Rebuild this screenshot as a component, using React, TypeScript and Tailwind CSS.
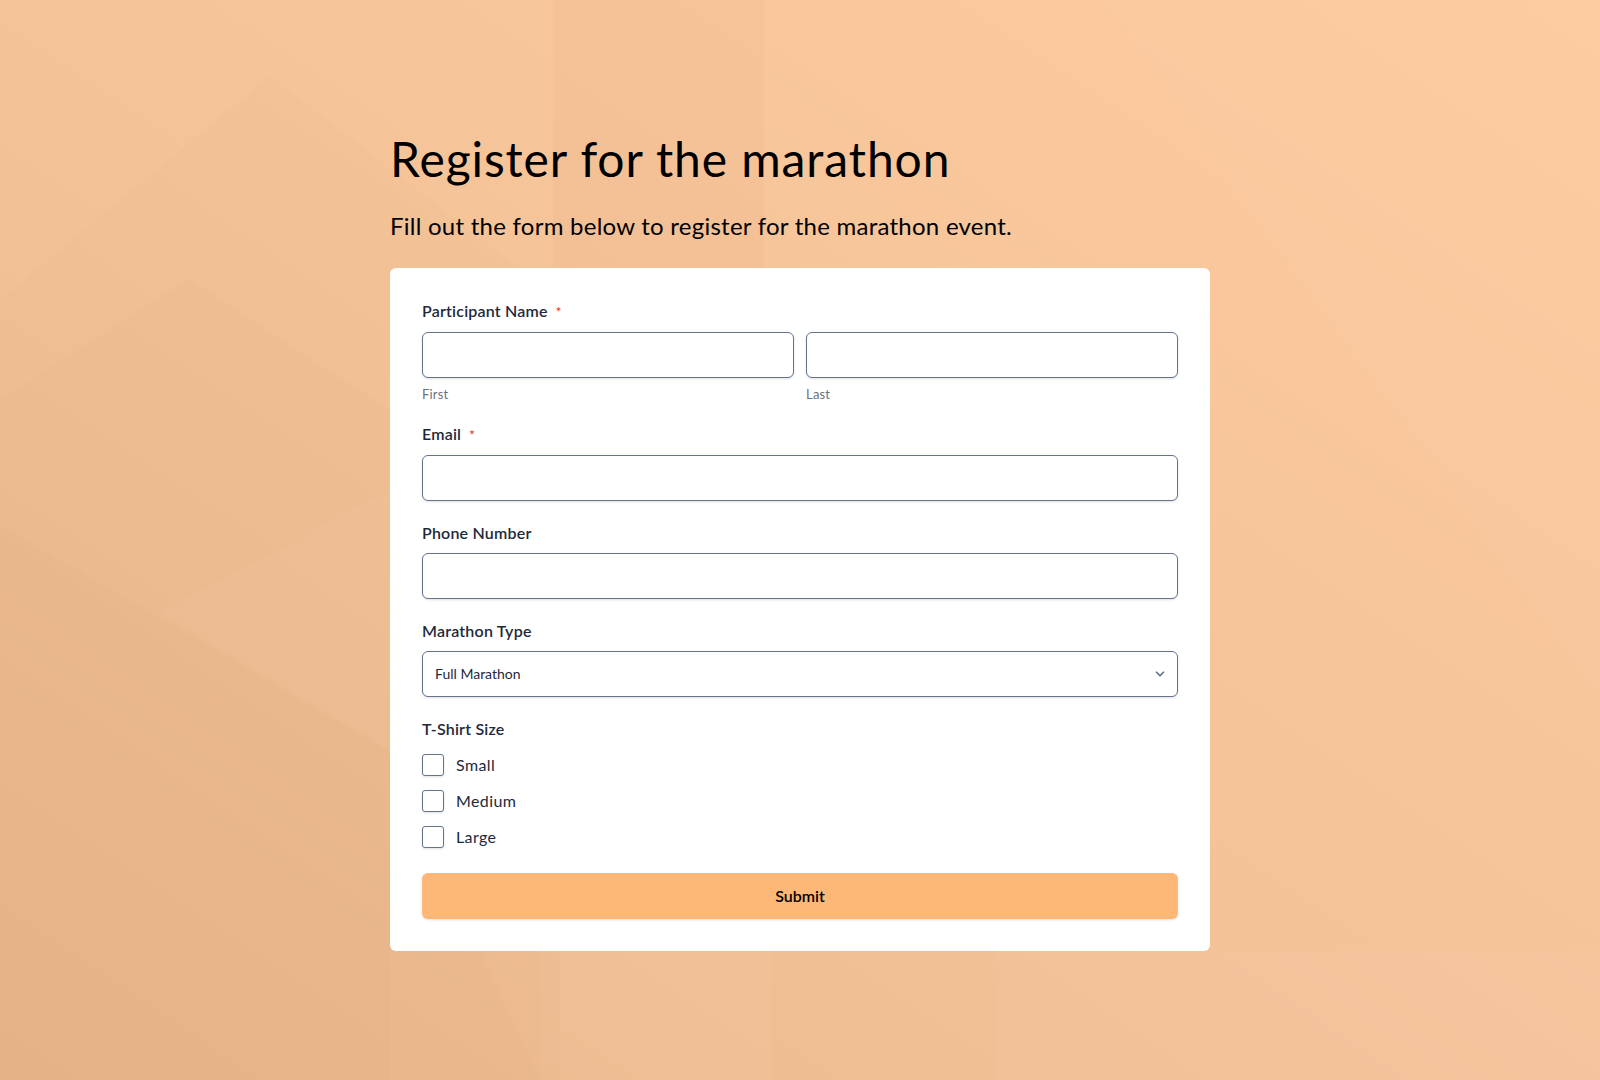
import { ChevronDown } from "lucide-react";

const Label = ({ text, required }: { text: string; required?: boolean }) => (
  <label className="mb-2 block text-[16px] leading-6 font-semibold tracking-[0.2px] text-[#1e293b]">
    {text}
    {required && <span className="ml-2 text-[13px] text-[#e0452b]">*</span>}
  </label>
);

const Input = () => (
  <input
    type="text"
    className="block h-[46px] w-full rounded-md border border-[#64748b] bg-white px-3 shadow-sm outline-none"
  />
);

const Background = () => (
  <svg
    className="absolute inset-0 h-full w-full"
    viewBox="0 0 1600 1080"
    preserveAspectRatio="none"
  >
    <defs>
      <linearGradient id="bg" x1="0" y1="1" x2="1" y2="0">
        <stop offset="0" stopColor="#eab88c" />
        <stop offset="0.5" stopColor="#f4c398" />
        <stop offset="1" stopColor="#fdcb9e" />
      </linearGradient>
    </defs>
    <rect width="1600" height="1080" fill="url(#bg)" />
    {/* faint geometric facets */}
    <polygon points="553,0 764,0 764,400 553,400" fill="#b06a30" opacity="0.03" />
    <polygon points="0,300 270,76 560,300 560,1080 0,1080" fill="#b06a30" opacity="0.018" />
    <polygon points="0,400 189,278 390,410 390,1080 0,1080" fill="#b06a30" opacity="0.018" />
    <polygon points="0,525 388,750 540,1080 0,1080" fill="#a8602a" opacity="0.02" />
    <polygon points="160,612 390,490 390,750" fill="#ffffff" opacity="0.04" />
    <polygon points="540,950 772,950 772,1080 540,1080" fill="#ffffff" opacity="0.03" />
    <polygon points="998,950 1600,950 1600,1080 998,1080" fill="#ffffff" opacity="0.04" />
    <polygon points="1100,0 1600,0 1600,700" fill="#ffffff" opacity="0.03" />
  </svg>
);

export default function App() {
  return (
    <div
      className="relative min-h-screen w-full overflow-hidden"
      style={{ fontFamily: "Lato, 'Open Sans', sans-serif" }}
    >
      <Background />
      <div className="relative mx-auto w-[820px] pt-[130px] pb-[130px]">
        <h1 className="text-[48px] leading-[1.2] font-normal tracking-[0.9px] text-black">
          Register for the marathon
        </h1>
        <p className="mt-[20px] text-[24px] leading-9 tracking-[0.25px] text-black">
          Fill out the form below to register for the marathon event.
        </p>

        <form className="mt-[24px] rounded-md bg-white px-8 pt-[31px] pb-8">
          <div className="mb-5">
            <Label text="Participant Name" required />
            <div className="grid grid-cols-2 gap-3">
              <div>
                <Input />
                <div className="mt-2 pt-px text-[13px] leading-[15px] tracking-[0.2px] text-[#6b7280]">First</div>
              </div>
              <div>
                <Input />
                <div className="mt-2 pt-px text-[13px] leading-[15px] tracking-[0.2px] text-[#6b7280]">Last</div>
              </div>
            </div>
          </div>

          <div className="mb-5">
            <Label text="Email" required />
            <Input />
          </div>

          <div className="mb-5">
            <Label text="Phone Number" />
            <Input />
          </div>

          <div className="mb-5">
            <Label text="Marathon Type" />
            <div className="relative">
              <select className="block h-[46px] w-full appearance-none rounded-md border border-[#64748b] bg-white px-3 text-[14px] text-[#1e293b] shadow-sm outline-none">
                <option>Full Marathon</option>
                <option>Half Marathon</option>
                <option>10K</option>
              </select>
              <ChevronDown
                className="pointer-events-none absolute top-1/2 right-[11px] h-[14px] w-[14px] -translate-y-1/2 text-[#64748b]"
                strokeWidth={3}
              />
            </div>
          </div>

          <div>
            <Label text="T-Shirt Size" />
            <div className="mt-3 flex flex-col gap-3">
              {["Small", "Medium", "Large"].map((size) => (
                <label key={size} className="flex h-6 items-center gap-3 text-[16px] tracking-[0.4px] text-[#1e293b]">
                  <span className="block h-[22px] w-[22px] rounded-[3px] border border-[#64748b] bg-white shadow-sm" />
                  {size}
                </label>
              ))}
            </div>
          </div>

          <button
            type="button"
            className="mt-6 h-[46px] w-full rounded-md bg-[#fdb777] text-[16px] font-semibold text-black shadow-sm"
          >
            Submit
          </button>
        </form>
      </div>
    </div>
  );
}
